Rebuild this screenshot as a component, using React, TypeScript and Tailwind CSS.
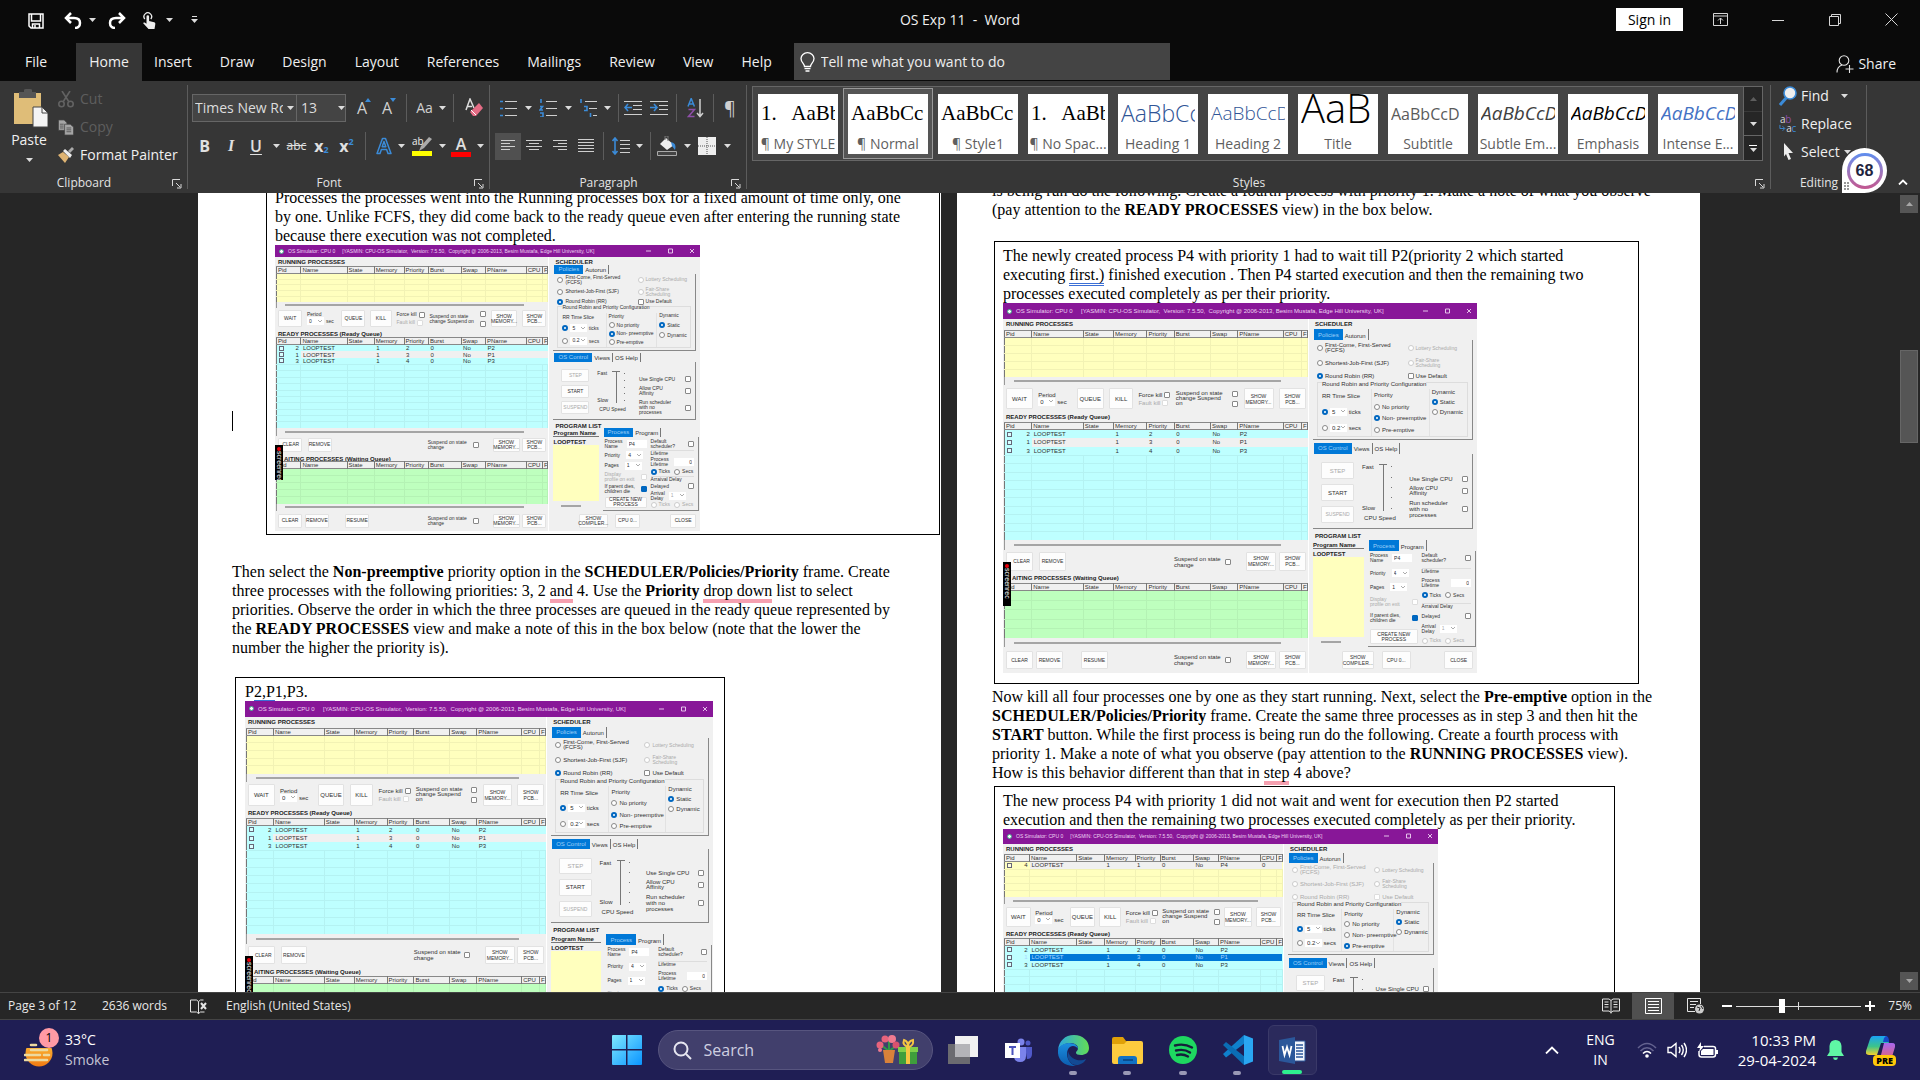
import React from "react";
import type { ReactNode } from "react";

/* ---------- shared bits ---------- */

function Caret({ className = "" }: { className?: string }) {
  return (
    <svg viewBox="0 0 7 4" className={"h-1 w-[7px] shrink-0 " + className} fill="#dcdcdc" aria-hidden="true">
      <path d="M0 0h7L3.500 4z" />
    </svg>
  );
}

function Drop({ label, className = "" }: { label: string; className?: string }) {
  return (
    <button aria-label={label} className={"flex h-6 items-center justify-center " + className}>
      <Caret />
    </button>
  );
}

function Tool({ label, className = "", children }: { label: string; className?: string; children: ReactNode }) {
  return (
    <button aria-label={label} className={"flex h-[27px] shrink-0 items-center justify-center " + className}>
      {children}
    </button>
  );
}

function Sep({ className = "" }: { className?: string }) {
  return <span className={"h-7 w-px shrink-0 bg-[#5c5c5c] " + className} />;
}

function Launcher({ label }: { label: string }) {
  return (
    <button aria-label={label} className="absolute right-1.5 bottom-1">
      <svg viewBox="0 0 10 10" className="size-2.5" fill="none" stroke="#d8d8d8">
        <path d="M.5 7V.5H8M4 4l4 4M9 5v4H5" />
      </svg>
    </button>
  );
}

function Group({ name, className = "", launcher = true, children }: { name: string; className?: string; launcher?: boolean; children: ReactNode }) {
  return (
    <section aria-label={name} className={"relative flex shrink-0 flex-col " + className}>
      <div className="flex-1">{children}</div>
      <div className={"h-5 text-center text-xs leading-5 text-[#e4e4e4] " + (launcher ? "pr-5" : "")}>{name}</div>
      {launcher && <Launcher label={name + " settings"} />}
      <span className="absolute top-1 right-0 bottom-1 w-px bg-[#5c5c5c]" />
    </section>
  );
}

/* ---------- title bar ---------- */

function TitleBar() {
  return (
    <header className="relative flex h-[43px] shrink-0 items-center pl-7 text-sm">
      <button aria-label="Save" className="mr-5 -mt-0.5">
        <svg viewBox="0 0 16 16" className="size-4" fill="none" stroke="#fff" strokeWidth="1.500">
          <path d="M1 1h14v14H3l-2-2zM3.500 1v7h9V1M4.500 15v-4h7v4M7 12v3" />
        </svg>
      </button>
      <button aria-label="Undo" className="-mt-0.5">
        <svg viewBox="0 0 18 17" className="h-[17px] w-[18px]" fill="none" stroke="#fff" strokeWidth="2.500">
          <path d="M7 1L2 6l5 5M2 6h8c4 0 6 2 6 5s-2 5-5 5" />
        </svg>
      </button>
      <Drop label="Undo list" className="-mt-1 w-5" />
      <button aria-label="Redo" className="ml-1.5 -mt-0.5">
        <svg viewBox="0 0 18 17" className="h-[17px] w-[18px] -scale-x-100" fill="none" stroke="#fff" strokeWidth="2.500">
          <path d="M7 1L2 6l5 5M2 6h8c4 0 6 2 6 5s-2 5-5 5" />
        </svg>
      </button>
      <button aria-label="Touch mode" className="ml-4 -mt-0.5">
        <svg viewBox="0 0 15 18" className="h-[18px] w-[15px]" fill="#eee">
          <path d="M4.500 4.500a1.300 1.300 0 0 1 2.600 0V9l5 1.200c1 .3 1.400 1 1.200 2L12.500 17H6.500L1 11c.8-.9 1.700-.7 3.500.8z" />
          <path d="M2.800 7a3.800 3.800 0 1 1 6 0" fill="none" stroke="#eee" strokeWidth="1.300" />
        </svg>
      </button>
      <Drop label="Touch mode list" className="-mt-1 w-6" />
      <button aria-label="Customize toolbar" className="ml-2.5 -mt-1">
        <svg viewBox="0 0 7 8" className="h-2 w-[7px]" fill="#ddd">
          <path d="M1 0h5v1H1zM0 3h7L3.500 7z" />
        </svg>
      </button>
      <h1 className="absolute inset-x-0 top-2.5 text-center whitespace-pre">OS Exp 11  -  Word</h1>
      <div className="relative -mt-1 ml-auto flex items-center">
        <button className="h-[23px] w-[67px] bg-white text-sm leading-[23px] text-black">Sign in</button>
        <button aria-label="Ribbon display options" className="ml-[23px] flex w-[29px] justify-center">
          <svg viewBox="0 0 15 13" className="h-[13px] w-[15px]" fill="none" stroke="#d6d6d6">
            <path d="M.5.5h14v12H.5zM.5 3h14M7.500 11V5M5 7.500L7.500 5 10 7.500" />
          </svg>
        </button>
        <button aria-label="Minimize" className="flex w-[53px] justify-end">
          <svg viewBox="0 0 12 12" className="mr-1 size-3" stroke="#d6d6d6"><path d="M0 6.500h12" /></svg>
        </button>
        <button aria-label="Restore" className="flex w-[57px] justify-end">
          <svg viewBox="0 0 12 12" className="mr-1 size-3" fill="none" stroke="#d6d6d6"><path d="M.5 2.500h9v9h-9zM2.500 2.500v-2h9v9h-2" /></svg>
        </button>
        <button aria-label="Close" className="mr-[18px] flex w-[57px] justify-end">
          <svg viewBox="0 0 13 13" className="mr-1 size-[13px]" stroke="#d6d6d6"><path d="M.5.5l12 12M12.500.5l-12 12" /></svg>
        </button>
      </div>
    </header>
  );
}

const TABS = ["Insert", "Draw", "Design", "Layout", "References", "Mailings", "Review", "View", "Help"];

function TabRow() {
  return (
    <nav className="flex h-[38px] shrink-0 items-stretch text-sm">
      <button className="w-[76px] pr-1 text-center">File</button>
      <button className="w-[66px] bg-[#363636] text-center">Home</button>
      <div className="-ml-0.5 flex">
        {TABS.map((t) => (
          <button key={t} className="px-3.5">{t}</button>
        ))}
      </div>
      <label className="ml-2 flex h-[37px] w-[376px] items-center gap-1.5 bg-[#444] pl-1.5">
        <svg viewBox="0 0 15 20" className="h-5 w-[15px] shrink-0" fill="none" stroke="#fff" strokeWidth="1.300">
          <path d="M4.500 14.500c0-3-3.500-4-3.500-8a6.500 5.800 0 0 1 13 0c0 4-3.500 5-3.500 8zM4.500 16.700h6M5.500 19h4" />
        </svg>
        <input aria-label="Tell me what you want to do" placeholder="Tell me what you want to do" className="w-full bg-transparent outline-none placeholder:text-[#eee]" />
      </label>
      <button className="mr-6 ml-auto flex items-center gap-1 pt-1">
        <svg viewBox="0 0 18 18" className="size-[18px]" fill="none" stroke="#e4e4e4" strokeWidth="1.100">
          <circle cx="8" cy="5.500" r="4.800" />
          <path d="M1 17.500c0-4 2-6.500 5-7.500M13.500 10v8M9.500 14h8" />
        </svg>
        Share
      </button>
    </nav>
  );
}

/* ---------- ribbon groups ---------- */

function ClipboardGroup() {
  return (
    <Group name="Clipboard" className="w-[188px]">
      <div className="flex text-sm">
        <button className="flex w-[58px] flex-col items-center pt-2 pl-1">
          <svg viewBox="0 0 34 39" className="h-[39px] w-[34px]">
            <path d="M0 4h27v31H0z" fill="#dfbd78" />
            <path d="M5 3h5V1q0-1 2-1h4q2 0 2 1v2h4v6H5z" fill="#555" />
            <path d="M19 18h9l6 6v14H19z" fill="#f4f4f4" stroke="#444" />
            <path d="M28 18v6h6" fill="none" stroke="#444" />
          </svg>
          <span className="mt-0.5 mr-1 leading-5">Paste</span>
          <Caret className="mt-2 mr-1" />
        </button>
        <div className="flex flex-col items-start gap-2 pt-2">
          <button disabled className="flex h-5 items-center gap-1.5 text-[#5e5e5e]">
            <svg viewBox="0 0 16 17" className="h-[17px] w-4" fill="none" stroke="#626262" strokeWidth="1.600">
              <path d="M4 0l7 11M12 0L5 11" />
              <circle cx="3.500" cy="13" r="2.700" /><circle cx="12.500" cy="13" r="2.700" />
            </svg>
            Cut
          </button>
          <button disabled className="flex h-5 items-center gap-1.5 text-[#5e5e5e]">
            <svg viewBox="0 0 17 17" className="h-[17px] w-4" fill="#a5a5a5" stroke="#444" strokeWidth=".8">
              <path d="M.5.5h6l3 3v8h-9z" /><path d="M7 5h6l3.500 3v8.500H7z" />
              <path d="M2 5h4M2 7h4M2 9h4M9 9h5M9 11h5M9 13h5" />
            </svg>
            Copy
          </button>
          <button className="flex h-5 items-center gap-1.5 whitespace-nowrap">
            <svg viewBox="0 0 16 16" className="size-4">
              <path d="M0 8l5-3 6 5-4 6z" fill="#dfb473" />
              <path d="M5 4l2-2 7 6-2 3z" fill="#eee" /><path d="M10 4l4-4 2 2-4 4z" fill="#aaa" />
            </svg>
            Format Painter
          </button>
        </div>
      </div>
    </Group>
  );
}

function GrowA({ down = false }: { down?: boolean }) {
  return (
    <span className="relative text-base text-[#d0d0d0]">
      A
      <svg viewBox="0 0 6 4" className="absolute top-0.5 -right-1 h-1 w-1.5" fill="#3b8bd8">
        <path d={down ? "M0 0h6L3 4z" : "M0 4h6L3 0z"} />
      </svg>
    </span>
  );
}

function FontGroup() {
  return (
    <Group name="Font" className="w-[302px]">
      <div className="flex h-[53px] items-center pl-1">
        <div className="flex h-7 w-[109px] items-center border border-[#666] bg-[#444]">
          <input aria-label="Font name" defaultValue="Times New Roman" className="mr-1 ml-0.5 w-[88px] bg-transparent text-sm text-[#ddd] outline-none" />
          <Caret />
        </div>
        <div className="-ml-px flex h-7 w-[52px] items-center border border-[#666] bg-[#444]">
          <input aria-label="Font size" defaultValue="13" className="ml-1 w-[37px] bg-transparent text-sm text-[#ddd] outline-none" />
          <Caret />
        </div>
        <Tool label="Grow font" className="ml-1 w-6"><GrowA /></Tool>
        <Tool label="Shrink font" className="w-[26px]"><GrowA down /></Tool>
        <Sep className="ml-1.5" />
        <Tool label="Change case" className="w-10 gap-1.5 pl-2 text-sm text-[#d0d0d0]">Aa<Caret /></Tool>
        <Sep className="ml-1.5" />
        <Tool label="Clear formatting" className="w-9 pl-1">
          <svg viewBox="0 0 18 19" className="h-[19px] w-[18px]">
            <path d="M1 12L5 1l4 9M2.500 8.500h4.500" fill="none" stroke="#ddd" strokeWidth="1.500" />
            <path d="M14 5l4 5-7 8H8l-3-4z" fill="#e46c85" /><path d="M6 12l5 5" stroke="#fff" />
          </svg>
        </Tool>
      </div>
      <div className="flex h-6 items-center pl-[3px] text-base text-[#e0e0e0]">
        <Tool label="Bold" className="w-[27px] font-bold">B</Tool>
        <Tool label="Italic" className="w-[26px] font-['Liberation_Serif',serif] font-bold italic">I</Tool>
        <Tool label="Underline" className="w-6 font-semibold underline underline-offset-2">U</Tool>
        <Drop label="Underline style" className="w-4" />
        <Tool label="Strikethrough" className="w-[25px] text-xs line-through">abc</Tool>
        <Tool label="Subscript" className="w-[25px] font-bold">x<span className="-mb-2 text-[9px] text-[#3b8bd8]">2</span></Tool>
        <Tool label="Superscript" className="w-[25px] font-bold">x<span className="-mt-2 text-[9px] text-[#3b8bd8]">2</span></Tool>
        <Sep className="mx-1.5" />
        <Tool label="Text effects" className="w-6">
          <svg viewBox="0 0 16 18" className="h-[18px] w-4" fill="none" stroke="#3b8bd8" strokeWidth="1.500" strokeLinejoin="round">
            <path d="M1 16.500L6.500 1.500h3l5.500 15h-3l-1.400-4H5.400l-1.400 4zM6.200 9.700h3.600L8 4.500z" />
          </svg>
        </Tool>
        <Drop label="Text effect list" className="w-[11px]" />
        <Tool label="Highlight" className="w-[30px]">
          <svg viewBox="0 0 20 20" className="size-5">
            <path d="M0 15h20v5H0z" fill="#ff0" /><path d="M17 1l3 2-8 9-5 3 2-5z" fill="#aaa" />
            <text x="0" y="9" fontSize="10" fill="#eee" fontFamily="Open Sans">ab</text>
          </svg>
        </Tool>
        <Drop label="Highlight colour" className="w-2.5" />
        <Tool label="Font colour" className="w-7 flex-col font-semibold"><span className="leading-4">A</span><span className="h-[5px] w-5 bg-[#f00]" /></Tool>
        <Drop label="Font colour list" className="w-2.5" />
      </div>
    </Group>
  );
}

function Lines({ d, blue, w = 18 }: { d: string; blue?: string; w?: number }) {
  return (
    <svg viewBox={"0 0 " + w + " 18"} width={w} height="18" fill="none" stroke="#cfcfcf">
      <path d={d} />
      {blue && <path d={blue} stroke="#3b8bd8" strokeWidth="1.600" />}
    </svg>
  );
}

function ParagraphGroup() {
  return (
    <Group name="Paragraph" className="w-[257px]">
      <div className="flex h-[53px] items-center pl-1">
        <Tool label="Bullets" className="w-7"><Lines d="M6 2.500h12M6 9.500h12M6 16.500h12" blue="M1 2.500h3M1 9.500h3M1 16.500h3" /></Tool>
        <Drop label="Bullet list" className="w-3" />
        <Tool label="Numbering" className="w-7"><Lines d="M7 2.500h11M7 9.500h11M7 16.500h11" blue="M2 0v4M1 7.500h2.500L1 11h3M1 14h3v4H1" /></Tool>
        <Drop label="Numbering list" className="w-3" />
        <Tool label="Multilevel list" className="w-7"><Lines d="M6 2.500h12M10 9.500h8M14 16.500h4" blue="M2 0v4M5 7.500h3v4H5M11.500 14v4" /></Tool>
        <Drop label="Multilevel choices" className="w-2.5" />
        <Sep className="ml-1.5" />
        <Tool label="Decrease indent" className="w-[27px]"><Lines d="M0 2.500h18M9 6.500h9M9 10.500h9M0 15.500h18" blue="M8 8.500H1M4 5L1 8.500l3 3.500" /></Tool>
        <Tool label="Increase indent" className="w-[26px]"><Lines d="M0 2.500h18M9 6.500h9M9 10.500h9M0 15.500h18" blue="M0 8.500h7M4 5l3 3.500L4 12" /></Tool>
        <Sep className="ml-1" />
        <Tool label="Sort" className="w-9">
          <svg viewBox="0 0 17 20" className="h-5 w-[17px]" fill="none" strokeWidth="1.500">
            <path d="M1 8.500L4.200.5l3.200 8M2 6h4.500" stroke="#3b8bd8" />
            <path d="M1.500 11.500h6l-6 7h6" stroke="#8e4fa8" /><path d="M13 1v17M10 15l3 3.500 3-3.500" stroke="#cfcfcf" />
          </svg>
        </Tool>
        <Sep />
        <Tool label="Show marks" className="w-8 text-lg text-[#cfcfcf]">¶</Tool>
      </div>
      <div className="flex h-6 items-center pl-[5px]">
        <Tool label="Align left" className="w-[26px] bg-[#505050]"><Lines w={16} d="M1 3.500h14M1 6.500h9M1 9.500h14M1 12.500h9" /></Tool>
        <Tool label="Centre" className="w-[26px]"><Lines w={16} d="M0 3.500h16M3 6.500h10M0 9.500h16M3 12.500h10" /></Tool>
        <Tool label="Align right" className="w-[26px]"><Lines w={16} d="M1 3.500h14M6 6.500h9M1 9.500h14M6 12.500h9" /></Tool>
        <Tool label="Justify" className="w-[26px]"><Lines w={16} d="M0 2.500h16M0 5.500h16M0 8.500h16M0 11.500h16M0 14.500h16" /></Tool>
        <Sep className="ml-1" />
        <Tool label="Line spacing" className="w-[34px]"><Lines d="M8 3.500h10M8 7.500h10M8 11.500h10M8 15.500h10" blue="M3 1v16M.5 4L3 1l2.500 3M.5 14L3 17l2.500-3" /></Tool>
        <Drop label="Line spacing list" className="-ml-1 w-2.5" />
        <Sep className="ml-1.5" />
        <Tool label="Shading" className="w-8">
          <svg viewBox="0 0 20 20" className="size-5">
            <path d="M9 2l8 7-7 5-7-6z" fill="#eee" /><path d="M14 6q6 1 4 8l-3-4z" fill="#3b8bd8" />
            <path d="M8 4V0h3v5" fill="none" stroke="#777" /><path d="M.5 15.500h19v4H.5z" fill="#444" stroke="#aaa" />
          </svg>
        </Tool>
        <Drop label="Shading list" className="w-2" />
        <Tool label="Borders" className="w-8">
          <svg viewBox="0 0 18 18" className="size-[18px]"><path d="M0 0h18v18H0z" fill="#eee" /><path d="M9 0v18M0 9h18" stroke="#555" strokeDasharray="1 1" /></svg>
        </Tool>
        <Drop label="Borders list" className="w-2" />
      </div>
    </Group>
  );
}

type Style = { name: string; sample: string; look: string };

const STYLES: Style[] = [
  { name: "¶ My STYLE", sample: "1.   AaBb", look: "font-['Liberation_Serif',serif] text-[21px] text-black" },
  { name: "¶ Normal", sample: "AaBbCc", look: "font-['Liberation_Serif',serif] text-[21px] text-black" },
  { name: "¶ Style1", sample: "AaBbCc", look: "font-['Liberation_Serif',serif] text-[21px] text-black" },
  { name: "¶ No Spac...", sample: "1.   AaBb", look: "font-['Liberation_Serif',serif] text-[21px] text-black" },
  { name: "Heading 1", sample: "AaBbCc", look: "font-['Open_Sans',sans-serif] font-light text-[23px] text-[#2f5496]" },
  { name: "Heading 2", sample: "AaBbCcD", look: "font-['Open_Sans',sans-serif] font-light text-[19px] text-[#2f5496]" },
  { name: "Title", sample: "AaB", look: "pb-3 font-['Open_Sans',sans-serif] font-light text-[40px] leading-[27px] text-black" },
  { name: "Subtitle", sample: "AaBbCcD", look: "font-['Open_Sans',sans-serif] text-[16px] text-[#5a5a5a]" },
  { name: "Subtle Em...", sample: "AaBbCcD", look: "font-['Open_Sans',sans-serif] italic text-[19px] text-[#404040]" },
  { name: "Emphasis", sample: "AaBbCcD", look: "font-['Open_Sans',sans-serif] italic text-[19px] text-black" },
  { name: "Intense E...", sample: "AaBbCcD", look: "font-['Open_Sans',sans-serif] italic text-[19px] text-[#4472c4]" },
];

function StylesGroup() {
  return (
    <Group name="Styles" className="w-[1024px]">
      <div className="mt-[5px] ml-[5px] flex h-[75px] w-[1011px] border border-[#666] bg-[#444]">
        <div className="flex flex-1 items-center">
          {STYLES.map((s, i) => (
            <button
              key={s.name}
              className={"flex h-[71px] w-[90px] items-center justify-center border " + (i === 1 ? "border-[#999] bg-[#555]" : "border-transparent")}
            >
              <span className="flex h-[60px] w-20 flex-col overflow-hidden bg-white px-[3px]">
                <span className={"flex h-10 shrink-0 items-center overflow-hidden whitespace-pre " + s.look}>{s.sample}</span>
                <span className="-mx-1 text-center text-sm leading-5 whitespace-nowrap text-[#5f5f5f]">{s.name}</span>
              </span>
            </button>
          ))}
        </div>
        <div className="flex w-[19px] flex-col divide-y divide-[#666] border-l border-[#666] bg-[#262626]">
          <button aria-label="Previous styles" className="flex flex-1 items-center justify-center opacity-30"><Caret className="rotate-180" /></button>
          <button aria-label="Next styles" className="flex flex-1 items-center justify-center"><Caret /></button>
          <button aria-label="More styles" className="flex flex-1 flex-col items-center justify-center gap-0.5"><span className="h-px w-2 bg-white" /><Caret /></button>
        </div>
      </div>
    </Group>
  );
}

function EditingGroup() {
  return (
    <Group name="Editing" className="w-24" launcher={false}>
      <div className="flex flex-col items-start gap-1.5 pt-1 pl-2 text-sm">
        <button className="flex h-[22px] items-center gap-1">
          <svg viewBox="0 0 18 20" className="h-5 w-[18px]"><path d="M1 19l7-8" stroke="#3b8bd8" strokeWidth="3" /><circle cx="11" cy="7" r="6" fill="#eee" stroke="#3b8bd8" strokeWidth="1.600" /></svg>
          Find<Caret className="ml-2" />
        </button>
        <button className="flex h-[22px] items-center gap-1">
          <svg viewBox="0 0 20 20" className="h-5 w-[18px]" fontFamily="Open Sans" fontSize="11">
            <text x="1" y="9" fill="#ddd">a</text><text x="7" y="9" fill="#8e4fa8">b</text>
            <text x="8" y="19" fill="#ddd">a</text><text x="14" y="19" fill="#3b8bd8">c</text>
            <path d="M1 11v4h5M4 12.500L6.500 15 4 17.500" fill="none" stroke="#3b8bd8" />
          </svg>
          Replace
        </button>
        <button className="flex h-[22px] items-center gap-1">
          <svg viewBox="0 0 18 18" className="size-[18px]" fill="#eee"><path d="M5 0l9 10H9.500l2.500 6-2.500 1L7 11l-2 2.500z" /></svg>
          Select<Caret />
        </button>
      </div>
    </Group>
  );
}

function ScoreBadge() {
  return (
    <div className="absolute right-[33px] bottom-0 z-10 flex size-[45px] items-center justify-center rounded-full rounded-bl-none bg-white">
      <div className="flex size-9 items-center justify-center rounded-full bg-linear-to-b from-[#5b8def] to-[#c2558f]">
        <span className="flex size-[30px] items-center justify-center rounded-full bg-white font-['Liberation_Sans',sans-serif] text-base font-bold text-[#1f2440]">68</span>
      </div>
      <svg viewBox="0 0 5 9" className="absolute bottom-0.5 left-0.5 h-[9px] w-[5px]" fill="#999">
        <path d="M0 0h2v2H0zM3 0h2v2H3zM0 3h2v2H0zM3 3h2v2H3zM0 6h2v2H0zM3 6h2v2H3z" />
      </svg>
    </div>
  );
}

/* ---------- simulator window pictured in the document ---------- */

const COLS = ["w-[9%]", "w-[17%]", "w-[10%]", "w-[11%]", "w-[9%]", "w-[12%]", "w-[9%]", "w-[15%]", "w-[6%]", "w-[2%]"];
const HEADS = ["Pid", "Name", "State", "Memory", "Priority", "Burst", "Swap", "PName", "CPU", "F"];

type Proc = { pid: string; prio: string; pname: string; look?: "grey" | "selected"; cpu?: string };

function ProcTable({ rows, total, fill, name }: { rows: Proc[]; total: number; fill: string; name: string }) {
  const blanks = Array.from({ length: total - rows.length });
  const rowHeight = { height: 100 / (total + 1) + "%" };
  return (
    <table aria-label={name} className={"h-full w-full table-fixed border-collapse overflow-hidden border-l border-[#777] text-[6px] leading-[6px] " + fill}>
      <thead>
        <tr style={rowHeight} className="border-t border-b border-[#888] bg-[#f0f0f0]">
          {HEADS.map((h, i) => (
            <th key={h} className={"overflow-hidden border-r border-[#777] p-0 pl-px text-left font-normal whitespace-nowrap " + COLS[i]}>{h}</th>
          ))}
        </tr>
      </thead>
      <tbody>
        {rows.map((r) => (
          <tr
            key={r.pid}
            style={rowHeight}
            className={r.look === "selected" ? "bg-[#0078d7] text-[#a8d4ff]" : r.look === "grey" ? "bg-[#f0f0f0]" : ""}
          >
            <td className={"p-0 " + (r.look ? fill : "")}>
              <label className="flex items-center justify-between pr-0.5 pl-0.5">
                <input type="checkbox" aria-label={"Process " + r.pid} className="size-[5px] appearance-none border border-[#667] bg-white/40" />
                {r.pid}
              </label>
            </td>
            <td className="p-0 pl-0.5">LOOPTEST</td>
            <td className="p-0" />
            <td className="p-0 pl-0.5">1</td>
            <td className="p-0 pl-0.5">{r.prio}</td>
            <td className="p-0 pl-0.5">0</td>
            <td className="p-0 pl-0.5">No</td>
            <td className="p-0 pl-0.5">{r.pname}</td>
            <td className="p-0 pl-0.5">{r.cpu}</td>
            <td className="p-0" />
          </tr>
        ))}
        {blanks.map((_, i) => (
          <tr key={i} style={rowHeight} className="border-t border-black/5">
            {HEADS.map((h) => <td key={h} className="border-r border-black/5 p-0" />)}
          </tr>
        ))}
      </tbody>
    </table>
  );
}

function Btn({ children, className = "", off = false }: { children: ReactNode; className?: string; off?: boolean }) {
  return (
    <button disabled={off} className={"flex items-center justify-center rounded-[1px] border border-[#e2e2e2] bg-[#fdfdfd] text-center " + (off ? "text-[#aaa] " : "") + className}>
      {children}
    </button>
  );
}

function Radio({ children, on = false, off = false, group, className = "" }: { children: ReactNode; on?: boolean; off?: boolean; group: string; className?: string }) {
  return (
    <label className={"flex items-center gap-0.5 whitespace-nowrap " + (off ? "text-[#aaa] " : "") + className}>
      <input
        type="radio"
        name={group}
        defaultChecked={on}
        className={"size-1.5 shrink-0 appearance-none rounded-full bg-white " + (on ? "border-2 border-[#0067c0]" : off ? "border border-[#ccc]" : "border border-[#888]")}
      />
      <span>{children}</span>
    </label>
  );
}

function Check({ label, on = false, off = false }: { label: string; on?: boolean; off?: boolean }) {
  return (
    <input
      type="checkbox"
      aria-label={label}
      defaultChecked={on}
      className={"size-1.5 shrink-0 appearance-none rounded-[1px] border " + (on ? "border-[#0067c0] bg-[#0067c0]" : off ? "border-[#ddd] bg-white" : "border-[#888] bg-white")}
    />
  );
}

function Pick({ label, value, off = false }: { label: string; value: string; off?: boolean }) {
  return (
    <span className="relative inline-flex items-center">
      <select aria-label={label} disabled={off} className={"h-2 w-[17px] appearance-none bg-white pl-0.5 opacity-100 " + (off ? "text-[#aaa]" : "")}>
        <option>{value}</option>
      </select>
      <svg viewBox="0 0 4 3" className="pointer-events-none absolute right-0.5 h-[3px] w-1" fill="none" stroke="#888" strokeWidth=".7"><path d="M0 0l2 2 2-2" /></svg>
    </span>
  );
}

function HBar() {
  return (
    <div className="flex items-center border-l border-[#999]"><span className="ml-[3%] h-0.5 w-[88%] bg-[#a5a5a5]" /></div>
  );
}

function PanelTitle({ children }: { children: ReactNode }) {
  return <h3 className="pt-0.5 pl-0.5 text-[6px] leading-[6px] font-bold whitespace-nowrap text-[#222]">{children}</h3>;
}

function TabStrip({ names }: { names: string[] }) {
  return (
    <div className="flex items-stretch pl-px text-[6px] leading-[6px]">
      {names.map((n, i) => (
        <button key={n} className={i === 0 ? "bg-[#0078d7] px-1 text-[#9fd0f8]" : "border-r border-[#777] px-0.5 pt-0.5 text-[#333]"}>{n}</button>
      ))}
    </div>
  );
}

type SimProps = { id: string; size: string; text: string; title: string; pre?: boolean; running?: Proc[]; ready: Proc[] };

function Simulator({ id, size, text, title, pre = false, running = [], ready }: SimProps) {
  return (
    <figure
      aria-label="OS Simulator window"
      className={
        "relative grid shrink-0 grid-cols-1 grid-rows-[16fr_354fr] overflow-hidden bg-[#f0f0f0] font-['Liberation_Sans',sans-serif] text-[#303030] *:min-h-0 " + size + " " + text
      }
    >
      <div className={"flex items-center bg-[#881798] px-1 whitespace-pre text-[#eed4f2] " + title}>
        <span className="mr-1 size-[5px] rounded-full border border-[#4a8] bg-white" />
        OS Simulator: CPU 0     [YASMIN: CPU-OS Simulator,  Version: 7.5.50,  Copyright @ 2006-2013, Besim Mustafa, Edge Hill University, UK]
        <svg viewBox="0 0 50 6" className="ml-auto h-1.5 w-[50px]" fill="none" stroke="#eed4f2" strokeWidth=".9">
          <path d="M0 3h5M22.500 1h4v4h-4zM44 1l4 4M48 1l-4 4" />
        </svg>
      </div>
      <div className="grid grid-cols-[305fr_169fr] *:min-h-0 *:min-w-0">
        {/* queues */}
        <div className="grid grid-cols-1 grid-rows-[66fr_27fr_138fr_23fr_74fr_26fr] pl-px *:min-h-0 *:min-w-0">
          <section className="grid grid-cols-1 grid-rows-[11fr_47fr_8fr] *:min-h-0">
            <PanelTitle>RUNNING PROCESSES</PanelTitle>
            <ProcTable name="Running processes" rows={running} total={5} fill="bg-[#ffffbe]" />
            <HBar />
          </section>
          <div className="flex items-center justify-between px-0.5">
            <Btn className="h-4/5 w-[9%]">WAIT</Btn>
            <div className="w-[11%]">
              <div>Period</div>
              <div className="flex items-center gap-0.5"><Pick label="Period" value="0" />sec</div>
            </div>
            <Btn className="h-4/5 w-[9%]">QUEUE</Btn>
            <Btn className="h-4/5 w-[8%]">KILL</Btn>
            <div className="flex flex-col gap-0.5">
              <label className="flex items-center gap-0.5">Force kill<Check label="Force kill" /></label>
              <label className="flex items-center gap-0.5 text-[#aaa]">Fault kill<Check label="Fault kill" off /></label>
            </div>
            <div className="w-[17%] leading-[5px]">Suspend on state change Suspend on</div>
            <div className="flex flex-col gap-1"><Check label="Suspend on state change" /><Check label="Suspend on preemption" /></div>
            <Btn className="h-4/5 w-[10%] text-[5px]">SHOW MEMORY...</Btn>
            <Btn className="h-4/5 w-[9%] text-[5px]">SHOW PCB...</Btn>
          </div>
          <section className="grid grid-cols-1 grid-rows-[10fr_118fr_10fr] *:min-h-0">
            <PanelTitle>READY PROCESSES (Ready Queue)</PanelTitle>
            <ProcTable name="Ready processes" rows={ready} total={13} fill="bg-[#beffff]" />
            <HBar />
          </section>
          <div className="flex items-center px-0.5">
            <Btn className="h-4/5 w-[9%] justify-end pr-0.5 text-[5px]">CLEAR</Btn>
            <Btn className="ml-[2%] h-4/5 w-[9%] text-[5px]">REMOVE</Btn>
            <span className="ml-auto w-[17%]">Suspend on state change</span>
            <Check label="Suspend ready queue" />
            <Btn className="ml-[5%] h-4/5 w-[10%] text-[5px]">SHOW MEMORY...</Btn>
            <Btn className="ml-[1%] h-4/5 w-[9%] text-[5px]">SHOW PCB...</Btn>
          </div>
          <section className="grid grid-cols-1 grid-rows-[10fr_55fr_9fr] *:min-h-0">
            <div className="pl-1.5"><PanelTitle>AITING PROCESSES (Waiting Queue)</PanelTitle></div>
            <ProcTable name="Waiting processes" rows={[]} total={5} fill="bg-[#beffbe]" />
            <HBar />
          </section>
          <div className="flex items-center px-0.5">
            <Btn className="h-[70%] w-[9%] text-[5px]">CLEAR</Btn>
            <Btn className="ml-[1%] h-[70%] w-[9%] text-[5px]">REMOVE</Btn>
            <Btn className="ml-[6%] h-[70%] w-[9%] text-[5px]">RESUME</Btn>
            <span className="ml-auto w-[17%]">Suspend on state change</span>
            <Check label="Suspend waiting queue" />
            <Btn className="ml-[5%] h-[70%] w-[10%] text-[5px]">SHOW MEMORY...</Btn>
            <Btn className="ml-[1%] h-[70%] w-[9%] text-[5px]">SHOW PCB...</Btn>
          </div>
        </div>
        {/* settings */}
        <div className="grid grid-cols-1 grid-rows-[121fr_91fr_116fr_26fr] border-l border-white pl-1 *:min-h-0 *:min-w-0">
          <section className="grid grid-cols-1 grid-rows-[10fr_11fr_99fr] pr-1 *:min-h-0">
            <PanelTitle>SCHEDULER</PanelTitle>
            <TabStrip names={["Policies", "Autorun"]} />
            <div className="grid grid-cols-1 grid-rows-[42fr_57fr] border-r border-b border-[#888] px-1 *:min-h-0">
              <div className="grid grid-cols-[3fr_2fr] items-center *:min-w-0">
                <Radio group={id + "policy"} off={pre} className="leading-[5px]">First-Come, First-Served<br />(FCFS)</Radio>
                <Radio group={id + "policy"} off className="text-[5px]">Lottery Scheduling</Radio>
                <Radio group={id + "policy"} off={pre}>Shortest-Job-First (SJF)</Radio>
                <Radio group={id + "policy"} off className="text-[5px] leading-[5px]">Fair-Share<br />Scheduling</Radio>
                <Radio group={id + "policy"} on={!pre} off={pre}>Round Robin (RR)</Radio>
                <label className={"flex items-center gap-0.5 " + (pre ? "text-[#aaa]" : "")}><Check label="Use default" off={pre} />Use Default</label>
              </div>
              <fieldset className="relative mb-0.5 grid grid-cols-[50fr_60fr_38fr] border border-[#ddd] pt-1.5 pl-1 *:min-w-0">
                <legend className="absolute -top-0.5 left-1 bg-[#f0f0f0]">Round Robin and Priority Configuration</legend>
                <div className="flex flex-col justify-around">
                  <span className="whitespace-nowrap">RR Time Slice</span>
                  <Radio group={id + "slice"} on><Pick label="Ticks" value="5" /> ticks</Radio>
                  <Radio group={id + "slice"}><Pick label="Seconds" value="0.2" /> secs</Radio>
                </div>
                <div className="flex flex-col justify-around border-x border-[#e2e2e2] pl-0.5">
                  <span>Priority</span>
                  <Radio group={id + "prio"}>No priority</Radio>
                  <Radio group={id + "prio"} on={!pre}>Non- preemptive</Radio>
                  <Radio group={id + "prio"} on={pre}>Pre-emptive</Radio>
                </div>
                <div className="flex flex-col justify-start gap-1 pl-0.5">
                  <span>Dynamic</span>
                  <Radio group={id + "dyn"} on>Static</Radio>
                  <Radio group={id + "dyn"}>Dynamic</Radio>
                </div>
              </fieldset>
            </div>
          </section>
          <section className="grid grid-cols-1 grid-rows-[3fr_11fr_76fr_2fr] pr-1 *:min-h-0">
            <span />
            <TabStrip names={["OS Control", "Views", "OS Help"]} />
            <div className="grid grid-cols-[46fr_48fr_60fr] border-r border-b border-[#888] px-1 pt-[4%] pb-[2%] *:min-h-0 *:min-w-0">
              <div className="flex flex-col justify-between py-0.5 pr-2 pl-1">
                <Btn off className="h-[28%]">STEP</Btn>
                <Btn className="h-[28%]">START</Btn>
                <Btn off className="h-[28%] text-[5px]">SUSPEND</Btn>
              </div>
              <div className="flex flex-col justify-between">
                <div className="flex flex-1 gap-1 py-1">
                  <div className="flex flex-col justify-between"><span>Fast</span><span>Slow</span></div>
                  <div className="flex w-2 flex-col items-center"><span className="h-px w-2 bg-[#777]" /><span className="w-px flex-1 bg-[#777]" /></div>
                  <div className="flex flex-col justify-between py-0.5">
                    <span className="size-px bg-[#777]" /><span className="size-px bg-[#777]" /><span className="size-px bg-[#777]" /><span className="size-px bg-[#777]" /><span className="size-px bg-[#777]" />
                  </div>
                </div>
                <span className="pb-1 pl-0.5">CPU Speed</span>
              </div>
              <div className="flex flex-col justify-center gap-1 pt-2">
                <label className="flex items-center justify-between whitespace-nowrap">Use Single CPU<Check label="Use single CPU" /></label>
                <label className="flex items-center justify-between leading-[5px]">Allow CPU<br />Affinity<Check label="Allow CPU affinity" /></label>
                <label className="flex items-center justify-between"><span>Run scheduler<br />with no<br />processes</span><Check label="Run scheduler" /></label>
              </div>
            </div>
          </section>
          <section className="grid grid-cols-1 grid-rows-[9fr_107fr] pr-px *:min-h-0">
            <PanelTitle>PROGRAM LIST</PanelTitle>
            <div className="grid grid-cols-[55fr_108fr] *:min-h-0 *:min-w-0">
              <div className="flex flex-col pr-1 text-[6px] leading-[6px] font-bold text-[#222]">
                <span className="border-b border-[#777] pt-0.5 whitespace-nowrap">Program Name</span>
                <span className="pt-0.5">LOOPTEST</span>
                <span className="flex-1 bg-[#ffffbe]" />
                <span className="my-1 ml-2 h-0.5 w-5 bg-[#a5a5a5]" />
              </div>
              <div className="grid grid-cols-1 grid-rows-[11fr_95fr] *:min-h-0">
                <TabStrip names={["Process", "Program"]} />
                <div className="grid grid-cols-[50fr_54fr] gap-1 border-r border-b border-[#888] px-0.5 text-[5px] leading-[5px] *:min-h-0 *:min-w-0">
                  <div className="flex flex-col justify-between py-0.5">
                    <label className="flex items-center gap-1">Process<br />Name<input aria-label="Process name" defaultValue="P4" className="h-2 w-5 bg-white px-0.5" /></label>
                    <label className="flex items-center gap-1.5">Priority<Pick label="Priority" value="4" /></label>
                    <label className="flex items-center gap-1.5">Pages<Pick label="Pages" value="1" /></label>
                    <label className="flex items-center justify-between text-[#aaa]"><span>Display<br />profile on exit</span><Check label="Display profile" off /></label>
                    <label className="flex items-center justify-between"><span>If parent dies,<br />children die</span><Check label="Children die" on /></label>
                    <Btn className="h-[16%]">CREATE NEW<br />PROCESS</Btn>
                  </div>
                  <div className="flex flex-col justify-between py-0.5 pr-0.5">
                    <label className="flex items-center justify-between"><span>Default<br />scheduler?</span><Check label="Default scheduler" /></label>
                    <span className="border-t border-[#ddd]">Lifetime</span>
                    <label className="flex items-center justify-between"><span>Process<br />Lifetime</span><input aria-label="Process lifetime" defaultValue="0" className="h-2 w-5 bg-white px-0.5 text-right" /></label>
                    <span className="flex gap-1"><Radio group={id + "life"} on>Ticks</Radio><Radio group={id + "life"}>Secs</Radio></span>
                    <span className="border-t border-[#ddd]">Arraival Delay</span>
                    <label className="flex items-center justify-between">Delayed<Check label="Delayed process" /></label>
                    <label className="flex items-center gap-1"><span>Arrival<br />Delay</span><Pick label="Arrival delay" value="1" off /></label>
                    <span className="flex gap-1"><Radio group={id + "arr"} off>Ticks</Radio><Radio group={id + "arr"} off>Secs</Radio></span>
                  </div>
                </div>
              </div>
            </div>
          </section>
          <div className="flex items-center pr-1">
            <Btn className="ml-[18%] h-[70%] w-[20%] text-[5px]">SHOW COMPILER...</Btn>
            <Btn className="ml-[5%] h-[70%] w-[18%] text-[5px]">CPU 0...</Btn>
            <Btn className="ml-auto h-[70%] w-[18%] text-[5px]">CLOSE</Btn>
          </div>
        </div>
      </div>
      <div className="absolute top-[70%] left-0 flex h-[12%] w-2 flex-col items-center overflow-hidden bg-black pt-0.5 text-white">
        <span className="size-1 shrink-0 rounded-full bg-red-600" />
        <span className="text-[7px] leading-[8px] [writing-mode:vertical-rl]">screenrec</span>
      </div>
    </figure>
  );
}

const READY: Proc[] = [
  { pid: "2", prio: "2", pname: "P2" },
  { pid: "1", prio: "3", pname: "P1", look: "grey" },
  { pid: "3", prio: "4", pname: "P3" },
];
const READY_SELECTED: Proc[] = [READY[0], { pid: "1", prio: "3", pname: "P1", look: "selected" }, READY[2]];
const RUNNING: Proc[] = [{ pid: "4", prio: "1", pname: "P4", look: "grey", cpu: "0" }];

/* ---------- document ---------- */

function L({ children }: { children: ReactNode }) {
  return <span className="block whitespace-nowrap">{children}</span>;
}

function Grammar({ children }: { children: ReactNode }) {
  return <span className="shadow-[0_4px_0_#f5a0b0]">{children}</span>;
}

function Link({ children }: { children: ReactNode }) {
  return <span className="border-b-3 border-double border-[#3b6fd6]">{children}</span>;
}

function LeftPage() {
  return (
    <article className="relative flex w-[743px] shrink-0 flex-col overflow-hidden bg-white pl-[34px]">
      <div className="-mt-1.5 ml-[34px] h-[348px] w-[674px] shrink-0 border border-black pl-2">
        <p>
          <L>Processes the processes went into the Running processes box for a fixed amount of time only, one</L>
          <L>by one. Unlike FCFS, they did come back to the ready queue even after entering the running state</L>
          <L>because there execution was not completed.</L>
        </p>
        <Simulator id="a" size="h-[286px] w-[425px]" text="text-[5px] leading-[5px]" title="text-[5px]" ready={READY} />
      </div>
      <span className="absolute top-[218px] left-[34px] h-5 w-px bg-black" />
      <p className="mt-[27px]">
        <L>Then select the <b>Non-preemptive</b> priority option in the <b>SCHEDULER/Policies/Priority</b> frame. Create</L>
        <L>three processes with the following priorities: 3, 2 <Grammar>and</Grammar> 4. Use the <b>Priority</b> <Grammar>drop down</Grammar> list to select</L>
        <L>priorities. Observe the order in which the three processes are queued in the ready queue represented by</L>
        <L>the <b>READY PROCESSES</b> view and make a note of this in the box below (note that the lower the</L>
        <L>number the higher the priority is).</L>
      </p>
      <div className="mt-5 ml-[3px] w-[490px] shrink-0 border border-black pt-1 pl-[9px]">
        <p><L>P<Link>2,P</Link>1,P3.</L></p>
        <Simulator id="b" size="h-[364px] w-[468px]" text="text-[6px] leading-[6px]" title="text-[6px]" ready={READY} />
      </div>
    </article>
  );
}

function RightPage() {
  return (
    <article className="flex w-[743px] shrink-0 flex-col overflow-hidden bg-white pl-[35px]">
      <p className="-mt-3">
        <L>is being run do the following. Create a fourth process with priority 1. Make a note of what you observe</L>
        <L>(pay attention to the <b>READY PROCESSES</b> view) in the box below.</L>
      </p>
      <div className="mt-[22px] ml-0.5 h-[443px] w-[645px] shrink-0 border border-black pt-1 pl-2">
        <p>
          <L>The newly created process P4 with priority 1 had to wait till P2(priority 2 which started</L>
          <L>executing <Link>first.)</Link> finished execution . Then P4 started execution and then the remaining two</L>
          <L>processes executed completely as per their priority.</L>
        </p>
        <Simulator id="c" size="h-[370px] w-[474px]" text="text-[6px] leading-[6px]" title="text-[6px]" ready={READY} />
      </div>
      <p className="mt-[3px]">
        <L>Now kill all four processes one by one as they start running. Next, select the <b>Pre-emptive</b> option in the</L>
        <L><b>SCHEDULER/Policies/Priority</b> frame. Create the same three processes as in step 3 and then hit the</L>
        <L><b>START</b> button. While the first process is being run do the following. Create a fourth process with</L>
        <L>priority 1. Make a note of what you observe (pay attention to the <b>RUNNING PROCESSES</b> view).</L>
        <L>How is this behavior different than that in <Grammar>step</Grammar> 4 above?</L>
      </p>
      <div className="mt-1 ml-0.5 w-[621px] shrink-0 border border-black pt-1 pl-2">
        <p>
          <L>The new process P4 with priority 1 did not wait and went for execution then P2 started</L>
          <L>execution and then the remaining two processes executed completely as per their priority.</L>
        </p>
        <Simulator id="d" size="h-[340px] w-[435px]" text="text-[6px] leading-[6px]" title="text-[5px]" pre running={RUNNING} ready={READY_SELECTED} />
      </div>
    </article>
  );
}

function DocumentArea() {
  return (
    <main className="flex min-h-0 flex-1 bg-[#262626]">
      <div className="flex min-w-0 flex-1 justify-center gap-4 overflow-hidden font-['Liberation_Serif',serif] text-base leading-[19px] text-black">
        <LeftPage />
        <RightPage />
      </div>
      <div className="flex w-[22px] flex-col items-center justify-between py-0.5">
        <button aria-label="Scroll up" className="flex size-[18px] items-center justify-center bg-[#555]"><Caret className="rotate-180 opacity-60" /></button>
        <div className="flex w-[18px] flex-1 flex-col"><span className="flex-[137]" /><span className="flex-[92] border border-[#666] bg-[#555]" /><span className="flex-[530]" /></div>
        <button aria-label="Scroll down" className="flex size-[18px] items-center justify-center bg-[#555]"><Caret className="opacity-60" /></button>
      </div>
    </main>
  );
}

/* ---------- status bar ---------- */

function StatusBar() {
  return (
    <footer className="flex h-7 shrink-0 items-stretch border-y border-[#444] bg-[#262626] pl-2 text-xs text-[#e8e8e8]">
      <button className="w-[94px] text-left">Page 3 of 12</button>
      <button className="w-[88px] text-left">2636 words</button>
      <button aria-label="Proofing" className="flex w-9 items-center">
        <svg viewBox="0 0 18 15" className="h-[15px] w-[18px]" fill="none" stroke="#e4e4e4">
          <path d="M8.500 2.500l-2-1.500H.5v12h6l2 1.500 2-1.500h4M8.500 2.500v12M8.500 2.500l2-1.500h3" /><path d="M11 4l5 6M16 4l-5 6" strokeWidth="2" />
        </svg>
      </button>
      <button>English (United States)</button>
      <div className="ml-auto flex items-stretch">
        <button aria-label="Read mode" className="flex w-[42px] items-center justify-center">
          <svg viewBox="0 0 18 16" className="h-4 w-[18px]" fill="none" stroke="#e4e4e4"><path d="M9 2.500L7 1H.5v12H7l2 1.500 2-1.500h6.500V1H11L9 2.500v13M2.500 4h4M2.500 6.500h4M2.500 9h4M11.500 4h4M11.500 6.500h4M11.500 9h4" /></svg>
        </button>
        <button aria-label="Print layout" className="flex w-[42px] items-center justify-center bg-[#505050]">
          <svg viewBox="0 0 17 16" className="h-4 w-[17px]" fill="none" stroke="#fff"><path d="M.5.5h16v15H.5zM3 3.500h11M3 6.500h11M3 9.500h11M3 12.500h11" /></svg>
        </button>
        <button aria-label="Web layout" className="flex w-[44px] items-center justify-center">
          <svg viewBox="0 0 18 16" className="h-4 w-[18px]" fill="none" stroke="#e4e4e4"><path d="M8 13.500H.5V.5h13V6M3 3.500h8M3 6.500h6M3 9.500h4" /><circle cx="12.500" cy="11" r="4.500" fill="#ccc" stroke="none" /><path d="M10 9l3 1-1 3M14 8l2 3" stroke="#262626" /></svg>
        </button>
        <button aria-label="Zoom out" className="flex w-[18px] items-center justify-center"><span className="h-0.5 w-2.5 bg-white" /></button>
        <label className="relative flex w-[125px] items-center">
          <span className="absolute left-[62px] h-2 w-px bg-[#ddd]" />
          <input type="range" aria-label="Zoom" min="0" max="100" defaultValue="36" className="h-px w-full appearance-none bg-[#ddd] [&::-webkit-slider-thumb]:h-3.5 [&::-webkit-slider-thumb]:w-1.5 [&::-webkit-slider-thumb]:appearance-none [&::-webkit-slider-thumb]:bg-white" />
        </label>
        <button aria-label="Zoom in" className="flex w-[18px] items-center justify-center">
          <svg viewBox="0 0 10 10" className="size-2.5" stroke="#fff" strokeWidth="2"><path d="M0 5h10M5 0v10" /></svg>
        </button>
        <button className="w-[41px] pr-2 text-right">75%</button>
      </div>
    </footer>
  );
}

/* ---------- taskbar ---------- */

function TaskButton({ label, open = false, className = "", children }: { label: string; open?: boolean; className?: string; children: ReactNode }) {
  return (
    <button aria-label={label} className={"relative flex h-[50px] items-center justify-center " + className}>
      {children}
      {open && <span className="absolute bottom-0 h-1 w-2 rounded-full bg-[#9a99b5]" />}
    </button>
  );
}

function Taskbar() {
  return (
    <div className="flex h-[60px] shrink-0 items-center bg-[#1f1e54] text-[15px] text-white">
      <div className="flex flex-1">
        <button className="flex items-center gap-2 pl-6 text-left leading-5">
          <span className="relative">
            <svg viewBox="0 0 33 36" className="h-9 w-[33px]">
              <defs><linearGradient id="sun" x1="0" y1="0" x2="0" y2="1"><stop offset="0" stopColor="#ffc43d" /><stop offset="1" stopColor="#f07a13" /></linearGradient></defs>
              <circle cx="15" cy="21" r="13.500" fill="url(#sun)" />
              <path d="M0 0h33v16H0z" fill="#1f1e54" />
              <path d="M7 13h5M7 18h16M1 23h15M1 28h22M20 23h5" stroke="#ecd9a0" strokeWidth="2.600" strokeLinecap="round" />
            </svg>
            <span className="absolute -top-1 -right-0.5 flex size-5 items-center justify-center rounded-full bg-[#ff9aa5] text-xs text-black">1</span>
          </span>
          <span>
            <span className="block text-sm leading-5">33°C</span>
            <span className="block text-sm leading-5 text-[#c4c4d4]">Smoke</span>
          </span>
        </button>
      </div>
      <div className="flex items-center pl-8">
        <TaskButton label="Start" className="w-[30px]">
          <svg viewBox="0 0 30 30" className="size-[30px]">
            <defs><linearGradient id="win" x1="0" y1="0" x2="1" y2="1"><stop offset="0" stopColor="#7fe8ff" /><stop offset="1" stopColor="#0a94ff" /></linearGradient></defs>
            <path d="M0 1q0-1 1-1h13v14H0zM15.500 0H29q1 0 1 1v13H15.500zM0 15.500h14V30H1q-1 0-1-1zM15.500 15.500H30V29q0 1-1 1H15.500z" fill="url(#win)" />
          </svg>
        </TaskButton>
        <label className="ml-4 flex h-10 w-[275px] items-center rounded-full border border-[#57557f] bg-[#413f6c] pl-3.5">
          <svg viewBox="0 0 19 19" className="size-[19px] shrink-0" fill="none" stroke="#e6e6f0" strokeWidth="2"><circle cx="8" cy="8" r="6.500" /><path d="M13 13l5 5" /></svg>
          <input aria-label="Search" placeholder="Search" className="ml-3 w-40 bg-transparent text-base outline-none placeholder:text-[#cfcfe0]" />
          <svg viewBox="0 0 42 30" className="ml-auto mr-3.5 h-[30px] w-[42px] shrink-0">
            <path d="M13 16V6M13 16L5 10M13 16l7-5" stroke="#2f9a46" strokeWidth="2" fill="none" />
            <circle cx="9" cy="4" r="3.500" fill="#e8637c" /><circle cx="16" cy="4" r="4" fill="#f07a90" /><circle cx="4" cy="10" r="3.500" fill="#e8637c" /><circle cx="20" cy="10" r="3.500" fill="#d9526e" /><circle cx="4" cy="15" r="2" fill="#f07a90" />
            <path d="M7 15h12l-2 13H9z" fill="#d9823a" />
            <path d="M22 12h20v5H22z" fill="#7fcf4a" /><path d="M23 17h18v12H23z" fill="#3f9e3c" /><path d="M30 12h4v17h-4z" fill="#f5c542" />
            <path d="M32 12q-6-2-4-7 4 1 4 7 0-6 5-7 1 6-5 7z" fill="none" stroke="#f5c542" strokeWidth="2" />
          </svg>
        </label>
        <TaskButton label="Task view" className="ml-[15px] w-[30px]">
          <svg viewBox="0 0 30 28" className="h-7 w-[30px]"><path d="M0 8h22v20H0z" fill="#6b6b70" /><path d="M7 0h23v21H7z" fill="#f1f1f1" /><path d="M7 8h15v13H7z" fill="#b4b4b8" /></svg>
        </TaskButton>
        <TaskButton label="Teams" className="ml-[27px] w-[27px]">
          <svg viewBox="0 0 27 24" className="h-6 w-[27px]">
            <circle cx="16" cy="4" r="3.500" fill="#7b83eb" /><circle cx="23" cy="5" r="2.500" fill="#5059c9" />
            <path d="M20 9h7v7q0 5-5 5z" fill="#5059c9" /><path d="M10 9h11v9q0 6-6 6t-6-6z" fill="#7b83eb" />
            <path d="M0 5h15v15H0z" fill="#fff" /><path d="M4 9h7M7.500 9v8" stroke="#4b53bc" strokeWidth="2" />
          </svg>
        </TaskButton>
        <TaskButton label="Edge" open className="ml-[26px] w-[31px]">
          <svg viewBox="0 0 31 31" className="size-[31px]">
            <defs>
              <linearGradient id="e1" x1="0" y1="0" x2="1" y2="0"><stop offset="0" stopColor="#2ba7e0" /><stop offset="1" stopColor="#63dd55" /></linearGradient>
              <linearGradient id="e2" x1="0" y1="0" x2="0" y2="1"><stop offset="0" stopColor="#1b8fe0" /><stop offset="1" stopColor="#0c5cae" /></linearGradient>
            </defs>
            <path d="M0 15C1 6 7 0 16 0c9 0 15 6 15 13 0 5-4 7-8 7-3 0-5-1-5-2 0-2 2-2 2-5 0-3-4-5-8-5C6 8 1 12 0 15z" fill="url(#e1)" />
            <path d="M0 15c1-4 6-7 11-7 6 0 9 3 9 6-1-2-3-3-5-3-4 0-6 4-6 8 0 6 5 12 10 12C8 32-1 26 0 15z" fill="url(#e2)" />
            <path d="M10 16c-2 8 3 15 10 14 4-1 7-3 8-6-6 3-16 1-18-8z" fill="#134a94" />
          </svg>
        </TaskButton>
        <TaskButton label="File Explorer" open className="ml-[23px] w-[31px]">
          <svg viewBox="0 0 31 27" className="h-[27px] w-[31px]"><path d="M0 2q0-2 2-2h9l3 4h15v6H0z" fill="#e0a008" /><path d="M0 7h12l3-3h14q2 0 2 2v19q0 2-2 2H2q-2 0-2-2z" fill="#fdcb3e" /><path d="M6 27v-5q0-3 3-3h13q3 0 3 3v5z" fill="#1272c4" /><path d="M11 23h10" stroke="#0a4d8f" strokeWidth="2" /></svg>
        </TaskButton>
        <TaskButton label="Spotify" open className="ml-[26px] w-7">
          <svg viewBox="0 0 28 28" className="size-7"><circle cx="14" cy="14" r="14" fill="#1ed760" /><path d="M6 9.500q9-2.500 17 2M7 14.500q8-2 14 2M8 19q6-1.500 11 1.500" stroke="#15203a" strokeWidth="2.400" strokeLinecap="round" fill="none" /></svg>
        </TaskButton>
        <TaskButton label="Visual Studio Code" open className="ml-[25px] w-[31px]">
          <svg viewBox="0 0 31 30" className="h-[30px] w-[31px]"><path d="M22 0L1 19l3 3.500L23 8z" fill="#0f80cc" /><path d="M1 10l3-3 19 15-1 8z" fill="#0a6db5" /><path d="M22 0l9 3.500v23L22 30z" fill="#2aa7f2" /></svg>
        </TaskButton>
        <TaskButton label="Word" className="ml-[15px] w-[49px] rounded-md border border-[#3a3968] bg-[#2b2a5c]">
          <svg viewBox="0 0 27 27" className="size-[27px]"><path d="M13 4h13v20H13z" fill="#f3f6fb" stroke="#2b579a" /><path d="M17 8h7M17 11h7M17 14h7M17 17h7M17 20h7" stroke="#2b579a" strokeWidth="1.300" /><path d="M0 3l16-3v27L0 24z" fill="#2b579a" /><path d="M3.500 9l2 9 2.500-8 2.500 8 2-9" stroke="#fff" strokeWidth="1.800" fill="none" /></svg>
          <span className="absolute bottom-0 h-1 w-5 rounded-full bg-[#2ef08f]" />
        </TaskButton>
      </div>
      <div className="flex flex-1 items-center justify-end pr-6 text-[15px] leading-5">
        <button aria-label="Hidden icons" className="mr-[27px]">
          <svg viewBox="0 0 14 8" className="h-2 w-3.5" fill="none" stroke="#fff" strokeWidth="1.800"><path d="M1 7.500l6-6 6 6" /></svg>
        </button>
        <button className="mr-[22px] text-center text-sm leading-5"><span className="block">ENG</span><span className="block">IN</span></button>
        <button aria-label="Network, volume and battery" className="mr-2 flex items-center gap-2.5">
          <svg viewBox="0 0 20 16" className="h-4 w-5" fill="none" strokeWidth="1.600">
            <path d="M1 6q9-9 18 0M3.500 9q6.500-6.500 13 0" stroke="#63628f" /><path d="M6 11.500q4-4 8 0" stroke="#fff" /><circle cx="10" cy="14" r="1.800" fill="#fff" />
          </svg>
          <svg viewBox="0 0 20 18" className="h-[18px] w-5" fill="none" stroke="#fff" strokeWidth="1.400"><path d="M1 6.500h3l5-4v13l-5-4H1zM12 6q2 3 0 6M14.500 4q3.500 5 0 10M17 2q5 7 0 14" /></svg>
          <svg viewBox="0 0 21 17" className="h-[17px] w-[21px]"><path d="M7 4.500h9q2.500 0 2.500 2v6q0 2.500-2.500 2.500H4.500Q2 15 2 12.500V9" fill="none" stroke="#fff" strokeWidth="1.500" /><path d="M6 7h10.500v6H4V9zM19 8h2v4h-2z" fill="#fff" /><path d="M4 0L0 6h3L2 10l5-6H4z" fill="#fff" /></svg>
        </button>
        <button className="ml-3 text-right"><span className="block">10:33 PM</span><span className="block">29-04-2024</span></button>
        <button aria-label="Notifications" className="ml-[11px]">
          <svg viewBox="0 0 17 20" className="h-5 w-[17px]" fill="#5ff7a5"><path d="M8.500 0Q14 0 14.500 6v6l2.500 4H0l2.500-4V6Q3 0 8.500 0zM6 17.500h5q-.5 2.500-2.500 2.500T6 17.500z" /></svg>
        </button>
        <button aria-label="Copilot" className="relative ml-[22px] h-8 w-[30px]">
          <svg viewBox="0 0 29 28" className="h-7 w-[29px]">
            <defs>
              <linearGradient id="c1" x1="0" y1="0" x2="0" y2="1"><stop offset="0" stopColor="#1aa3f5" /><stop offset=".55" stopColor="#3cc48a" /><stop offset="1" stopColor="#f7d02c" /></linearGradient>
              <linearGradient id="c2" x1="0" y1="0" x2="0" y2="1"><stop offset="0" stopColor="#a767f0" /><stop offset="1" stopColor="#f2645c" /></linearGradient>
            </defs>
            <path d="M7 0h12q3 0 3 4l1 3h-8l-4 12H3q-4 0-3-4L4 3q1-3 3-3z" fill="url(#c1)" />
            <path d="M20 0q3 0 3 6h-6l1-4z" fill="#1648c8" />
            <path d="M18 7h8q4 0 3 4l-4 13q-1 3-4 3H10q3 0 4-4z" fill="url(#c2)" />
          </svg>
          <span className="absolute right-0 bottom-0 rounded bg-[#ffc80a] px-[3px] text-[9px] leading-[11px] font-extrabold text-black">PRE</span>
        </button>
      </div>
    </div>
  );
}

export default function App() {
  return (
    <div className="flex h-screen flex-col overflow-hidden bg-[#0a0a0a] font-['Open_Sans',sans-serif] text-[#f0f0f0]">
      <TitleBar />
      <TabRow />
      <div className="relative flex h-28 shrink-0 bg-[#363636]">
        <ClipboardGroup />
        <FontGroup />
        <ParagraphGroup />
        <StylesGroup />
        <EditingGroup />
        <ScoreBadge />
        <button aria-label="Collapse ribbon" className="absolute right-3 bottom-2">
          <svg viewBox="0 0 10 6" className="h-1.5 w-2.5" fill="none" stroke="#fff" strokeWidth="1.800"><path d="M1 5.500l4-4 4 4" /></svg>
        </button>
      </div>
      <DocumentArea />
      <StatusBar />
      <Taskbar />
    </div>
  );
}
